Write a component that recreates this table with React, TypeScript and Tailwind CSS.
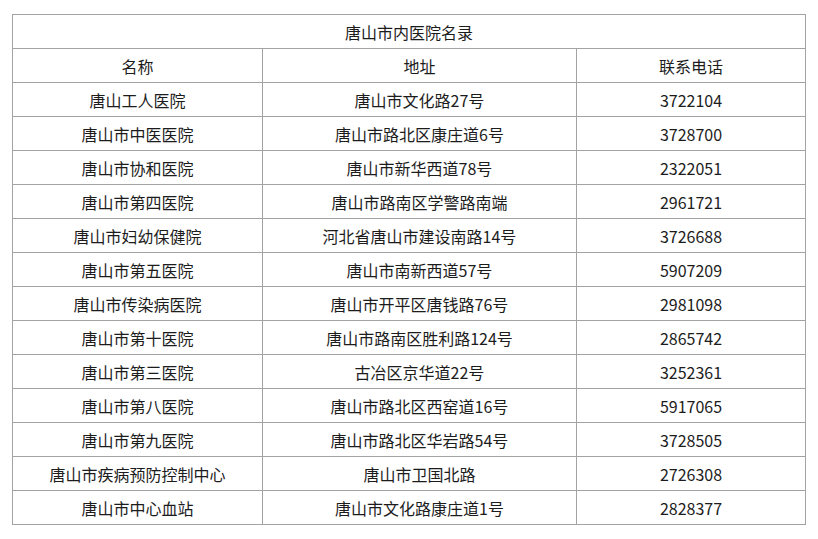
import React from "react";

const rows: [string, string, string][] = [
  ["唐山工人医院", "唐山市文化路27号", "3722104"],
  ["唐山市中医医院", "唐山市路北区康庄道6号", "3728700"],
  ["唐山市协和医院", "唐山市新华西道78号", "2322051"],
  ["唐山市第四医院", "唐山市路南区学警路南端", "2961721"],
  ["唐山市妇幼保健院", "河北省唐山市建设南路14号", "3726688"],
  ["唐山市第五医院", "唐山市南新西道57号", "5907209"],
  ["唐山市传染病医院", "唐山市开平区唐钱路76号", "2981098"],
  ["唐山市第十医院", "唐山市路南区胜利路124号", "2865742"],
  ["唐山市第三医院", "古冶区京华道22号", "3252361"],
  ["唐山市第八医院", "唐山市路北区西窑道16号", "5917065"],
  ["唐山市第九医院", "唐山市路北区华岩路54号", "3728505"],
  ["唐山市疾病预防控制中心", "唐山市卫国北路", "2726308"],
  ["唐山市中心血站", "唐山市文化路康庄道1号", "2828377"],
];

const cell = "border border-[#a3a3a3] text-center align-middle p-0 leading-none";

export default function App() {
  return (
    <div
      className="w-[818px] h-[539px] bg-white overflow-hidden pt-[14px] pl-[12px] text-[#1c1c1c] text-[16px]"
      style={{ fontFamily: '"Noto Sans CJK SC", "Microsoft YaHei", sans-serif' }}
    >
      <table className="border-collapse table-fixed w-[793px]">
        <colgroup>
          <col className="w-[250px]" />
          <col className="w-[314px]" />
          <col className="w-[229px]" />
        </colgroup>
        <tbody>
          <tr className="h-[34px]">
            <td colSpan={3} className={cell}>唐山市内医院名录</td>
          </tr>
          <tr className="h-[34px]">
            <td className={cell}>名称</td>
            <td className={cell}>地址</td>
            <td className={cell}>联系电话</td>
          </tr>
          {rows.map((r) => (
            <tr key={r[0]} className="h-[34px]">
              <td className={cell}>{r[0]}</td>
              <td className={cell}>{r[1]}</td>
              <td className={cell}>{r[2]}</td>
            </tr>
          ))}
        </tbody>
      </table>
    </div>
  );
}
